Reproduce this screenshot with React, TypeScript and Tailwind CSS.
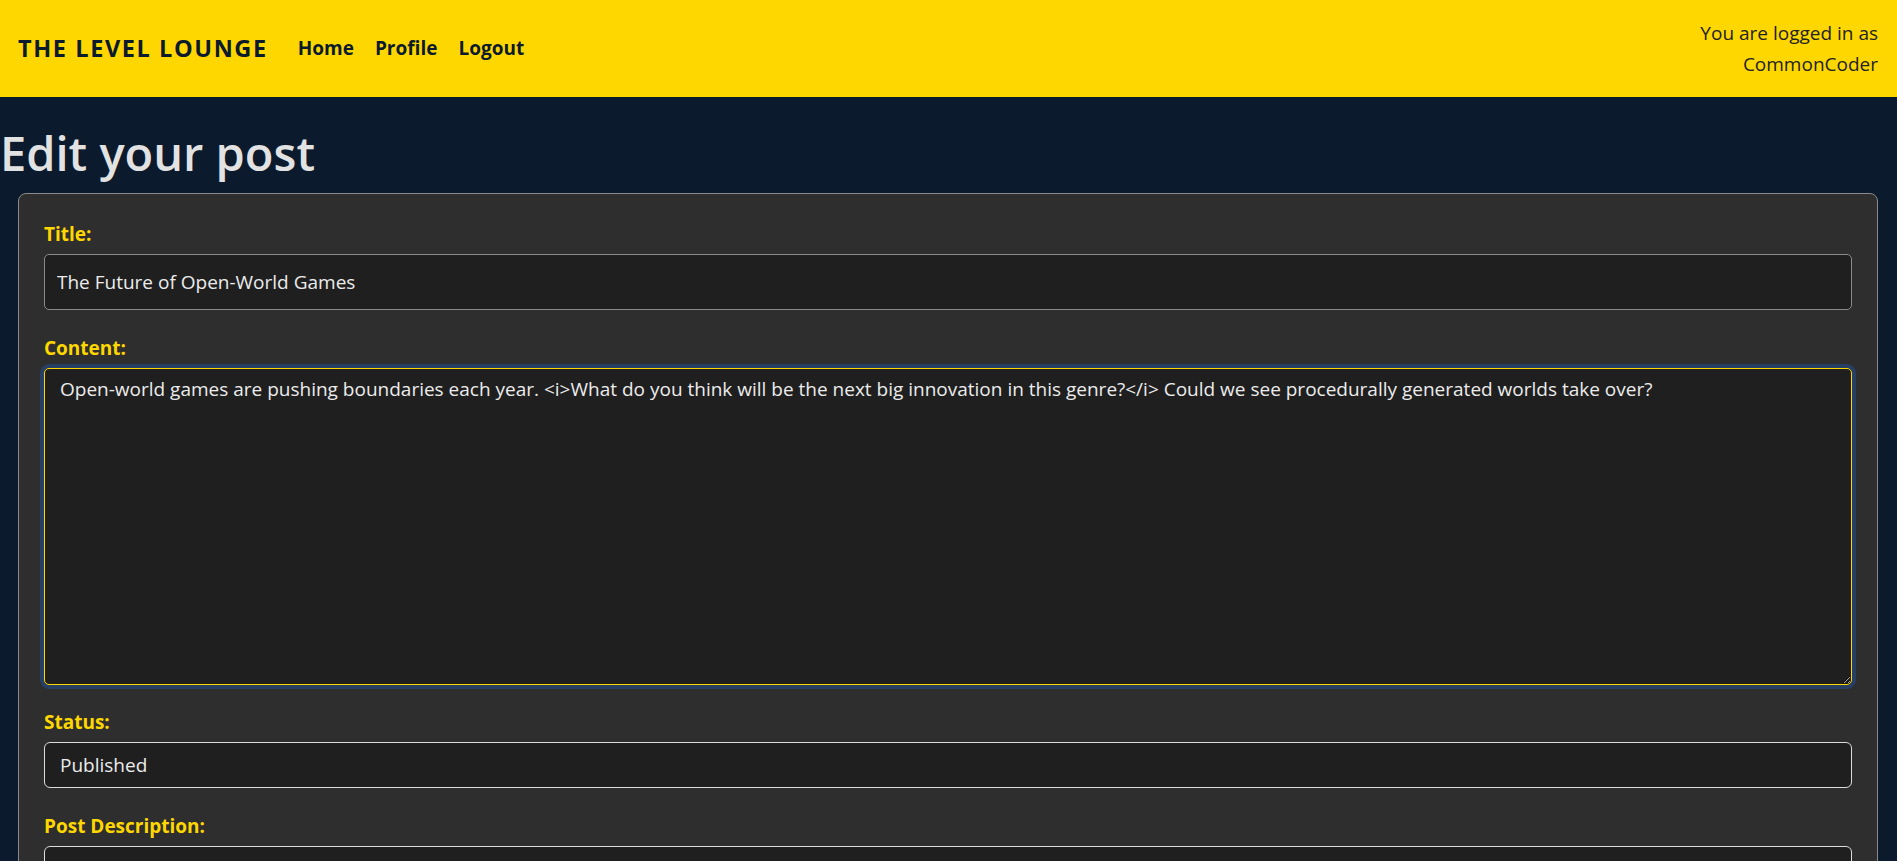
import React from "react";

const content =
  "Open-world games are pushing boundaries each year. <i>What do you think will be the next big innovation in this genre?</i> Could we see procedurally generated worlds take over?";

function Navbar() {
  return (
    <nav className="flex h-[97px] items-center justify-between bg-[#ffd700] pl-[18px] pr-[19px] text-[#0b1a2c]">
      <div className="flex items-center">
        <span className="text-[23.5px] font-bold tracking-[1.6px]">THE LEVEL LOUNGE</span>
        <ul className="ml-[30px] flex gap-[21px] text-[19px] font-bold">
          <li>Home</li>
          <li>Profile</li>
          <li>Logout</li>
        </ul>
      </div>
      <div className="text-right text-[19px] leading-[31px] text-[#222]">
        <p>You are logged in as</p>
        <p>CommonCoder</p>
      </div>
    </nav>
  );
}

function Label({ children }: { children: React.ReactNode }) {
  return <label className="mb-[7px] block text-[19px] font-bold leading-[26px] text-[#ffd700]">{children}</label>;
}

export default function App() {
  return (
    <div className="min-h-screen bg-[#0b1a2c] font-['Open_Sans',sans-serif]">
      <Navbar />
      <h1 className="mt-[26px] text-[47px] font-semibold leading-[60px] text-[#e2e2e2]">Edit your post</h1>
      <div className="ml-[18px] mr-[19px] mt-[10px] rounded-[8px] border border-[#8a8a8a] bg-[#2e2e2e] px-[25px] pt-[27px] pb-[30px]">
        <Label>Title:</Label>
        <input
          readOnly
          value="The Future of Open-World Games"
          className="mb-[25px] block h-[56px] w-full rounded-[5px] border border-[#8a8a8a] bg-[#1f1f1f] px-[12px] text-[19px] text-[#ececec] outline-none"
        />
        <Label>Content:</Label>
        <textarea
          readOnly
          value={content}
          className="mb-[24px] block h-[317px] w-full resize-y rounded-[5px] border border-[#ffd700] bg-[#1f1f1f] px-[15px] py-[6px] text-[19px] leading-[28px] text-[#ececec] shadow-[0_0_0_4px_#263f63] outline-none"
        />
        <Label>Status:</Label>
        <div className="mb-[25px] flex h-[46px] w-full items-center rounded-[6px] border border-[#dcdcdc] bg-[#1f1f1f] px-[15px] text-[19px] text-[#ececec]">
          Published
        </div>
        <Label>Post Description:</Label>
        <div className="h-[46px] w-full rounded-[6px] border border-[#dcdcdc] bg-[#1f1f1f]" />
      </div>
    </div>
  );
}
